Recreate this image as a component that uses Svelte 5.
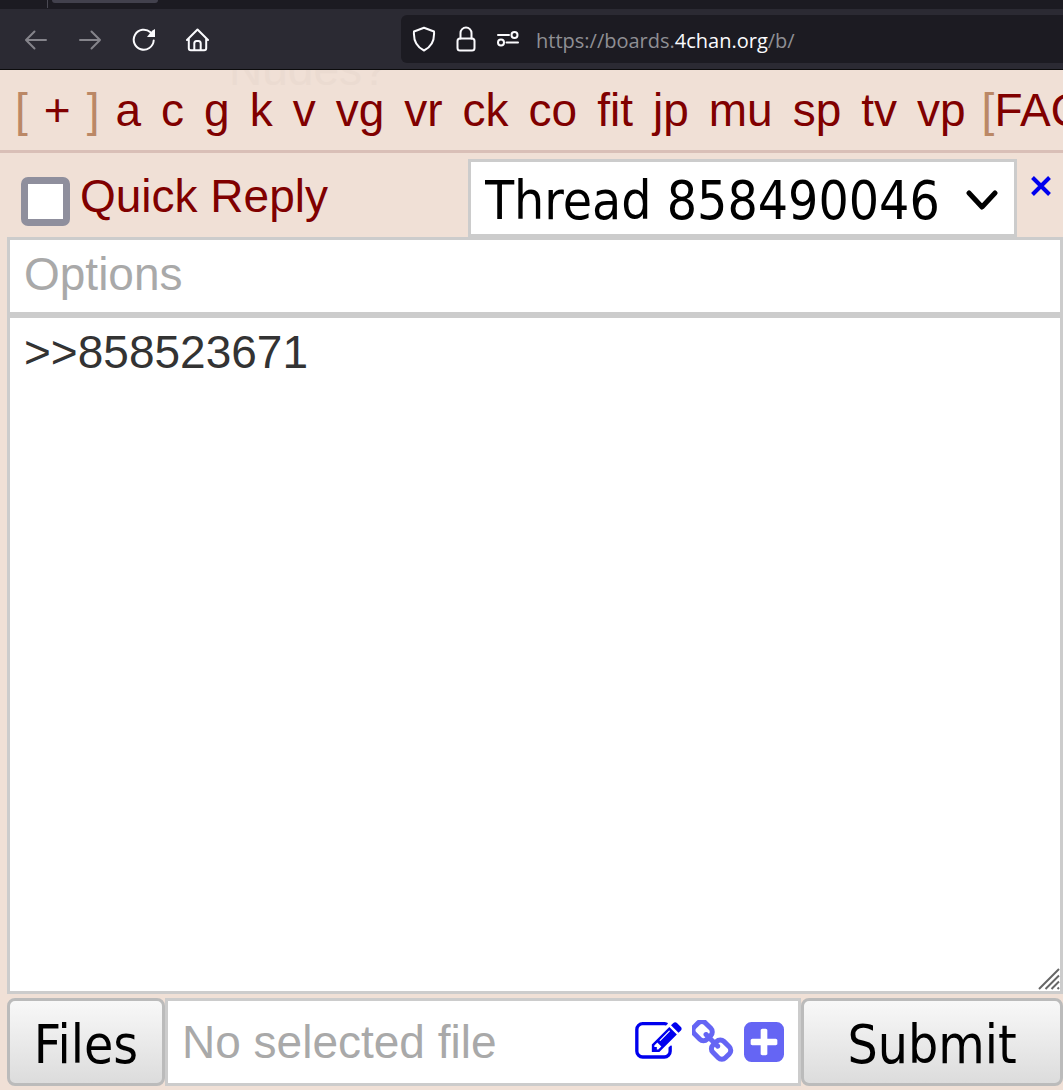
<script lang="ts">
  const boards: string[] = ['a', 'c', 'g', 'k', 'v', 'vg', 'vr', 'ck', 'co', 'fit', 'jp', 'mu', 'sp', 'tv', 'vp']

  let showForm = $state(false)
  let thread = $state('858490046')
  let options = $state('')
  let comment = $state('>>858523671')
  let fileName = $state('')
</script>

<div class="window">
  <div class="tabs">
    <span class="tab-divider"></span>
    <span class="tab"></span>
  </div>

  <div class="toolbar">
    <div class="nav-buttons">
      <button type="button" class="dim" aria-label="Back">
        <svg width="24" height="24" viewBox="0 0 24 24"><path d="M22 12H2.500M10.500 3.500 2 12l8.500 8.500" /></svg>
      </button>
      <button type="button" class="dim" aria-label="Forward">
        <svg width="24" height="24" viewBox="0 0 24 24"><path d="M2 12h20M13.500 3.500 22 12l-8.500 8.500" /></svg>
      </button>
      <button type="button" aria-label="Reload">
        <svg width="24" height="24" viewBox="0 0 24 24">
          <path d="M21.700 12.500a10 10 0 1 1-3.200-8.200" />
          <path class="solid" d="M23 1v8h-8l2.500-3.200L20.500 2.500z" />
        </svg>
      </button>
      <button type="button" aria-label="Home">
        <svg width="24" height="24" viewBox="0 0 24 24">
          <path d="M1 12 11.500 1.500 22 12M2.800 10.500v9.700q0 2 2 2h13.400q2 0 2-2v-9.700M8.300 22v-6.500q0-2.500 2.200-2.500h2q2.200 0 2.200 2.500V22" />
        </svg>
      </button>
    </div>
    <div class="address">
      <svg width="24" height="26" viewBox="0 0 24 26">
        <path d="M12 1.800 22 5.500c.6 8-2.500 15.500-10 19C4.500 21 1.400 13.500 2 5.500z" />
      </svg>
      <svg width="20" height="26" viewBox="0 0 20 26">
        <rect x="1.500" y="12.500" width="17" height="12" rx="2.500" />
        <path d="M4.500 12.500V7a5.500 5.500 0 0 1 11 0v5.500" />
      </svg>
      <svg width="24" height="26" viewBox="0 0 24 26">
        <circle cx="18.500" cy="9" r="3" /><circle cx="5" cy="16.500" r="3" />
        <path d="M2 9h11M10.500 16.500H22" />
      </svg>
      <span class="url">https://boards.<b>4chan.org</b>/b/</span>
    </div>
  </div>

  <main>
    <div class="ghost" aria-hidden="true"><span>Nudes?</span></div>

    <nav class="nav">
      <span class="more">[<a href="#more">+</a>]</span>
      <span class="boards">
        {#each boards as board}
          <a href={`#${board}`}>{board}</a>
        {/each}
      </span>
      <span>[<a href="#faq">FAQ</a>]</span>
    </nav>

    <form class="reply" onsubmit={(e) => e.preventDefault()}>
      <div class="head">
        <label class="title">
          <input type="checkbox" bind:checked={showForm} />
          Quick Reply
        </label>
        <div class="select">
          <select bind:value={thread} aria-label="Thread">
            <option value="858490046">Thread 858490046</option>
          </select>
          <svg width="32" height="20" viewBox="0 0 32 20"><path d="M3 3l13 14L29 3" /></svg>
        </div>
        <button type="button" class="close" aria-label="Close">
          <svg width="20" height="20" viewBox="0 0 20 20"><path d="M1.500 1.500l17 17M18.500 1.500l-17 17" /></svg>
        </button>
      </div>

      <input class="field" type="text" placeholder="Options" aria-label="Options" bind:value={options} />

      <div class="comment">
        <textarea class="field" aria-label="Comment" bind:value={comment}></textarea>
        <svg class="grip" width="22" height="22" viewBox="0 0 22 22">
          <path d="M1 21 21 1M7.500 21 21 7.500M13.500 21l7.500-7.500M19.500 21l1.500-1.500" />
        </svg>
      </div>

      <div class="foot">
        <button type="button" class="button">Files</button>
        <div class="file">
          <input type="text" placeholder="No selected file" aria-label="File" readonly bind:value={fileName} />
          <button type="button" aria-label="Edit image">
            <svg width="47" height="40" viewBox="0 128 1792 1536">
              <path
                d="M888 1184l116-116-152-152-116 116v56h96v96h56zm440-720q-16-16-33 1l-350 350q-17 17-1 33t33-1l350-350q17-17 1-33zm80 594v190q0 119-84.500 203.500t-203.500 84.500h-832q-119 0-203.500-84.500t-84.500-203.500v-832q0-119 84.500-203.500t203.500-84.500h832q63 0 117 25 15 7 18 23 3 17-9 29l-49 49q-14 14-32 8-23-6-45-6h-832q-66 0-113 47t-47 113v832q0 66 47 113t113 47h832q66 0 113-47t47-113v-126q0-13 9-22l64-64q15-15 35-7t20 29zm-96-738l288 288-672 672h-288v-288zm444 132l-92 92-288-288 92-92q28-28 68-28t68 28l152 152q28 28 28 68t-28 68z"
              />
            </svg>
          </button>
          <button type="button" class="light" aria-label="Add from URL">
            <svg width="42" height="44" viewBox="76 76 1600 1640">
              <path
                d="M1456 1216q0-40-28-68l-208-208q-28-28-68-28-42 0-72 32 3 3 19 18.500t21.500 21.500 15 19 13 25.500 3.500 27.500q0 40-28 68t-68 28q-15 0-27.500-3.500t-25.500-13-19-15-21.500-21.500-18.500-19q-33 31-33 73 0 40 28 68l206 207q27 27 68 27 40 0 68-26l147-146q28-28 28-67zm-703-705q0-40-28-68l-206-207q-28-28-68-28-39 0-68 27l-147 146q-28 28-28 67 0 40 28 68l208 208q27 27 68 27 42 0 72-31-3-3-19-18.500t-21.500-21.500-15-19-13-25.500-3.500-27.500q0-40 28-68t68-28q15 0 27.500 3.500t25.500 13 19 15 21.500 21.500 18.500 19q33-31 33-73zm895 705q0 120-85 203l-147 146q-83 83-203 83-121 0-204-85l-206-207q-83-83-83-203 0-123 88-209l-88-88q-86 88-208 88-120 0-204-84l-208-208q-84-84-84-204t85-203l147-146q83-83 203-83 121 0 204 85l206 207q83 83 83 203 0 123-88 209l88 88q86-88 208-88 120 0 204 84l208 208q84 84 84 204z"
              />
            </svg>
          </button>
          <button type="button" class="light" aria-label="Add file">
            <svg width="40" height="40" viewBox="128 128 1536 1536">
              <path
                d="M1408 960v-128q0-26-19-45t-45-19h-320v-320q0-26-19-45t-45-19h-128q-26 0-45 19t-19 45v320h-320q-26 0-45 19t-19 45v128q0 26 19 45t45 19h320v320q0 26 19 45t45 19h128q26 0 45-19t19-45v-320h320q26 0 45-19t19-45zm256-544v960q0 119-84.500 203.500t-203.500 84.500h-960q-119 0-203.500-84.500t-84.500-203.500v-960q0-119 84.500-203.500t203.500-84.500h960q119 0 203.500 84.500t84.500 203.500z"
              />
            </svg>
          </button>
        </div>
        <button type="submit" class="button submit">Submit</button>
      </div>
    </form>
  </main>
</div>

<style>
  :global(body) {
    background: #f0e0d6;
  }

  .window {
    display: flex;
    flex-direction: column;
    min-height: 100vh;
    overflow: hidden;
    font-family: 'Liberation Sans', Arial, sans-serif;
    font-size: 46px;
    line-height: 54px;
    color: #bb8866;
  }

  button {
    padding: 0;
    border: 0;
    background: none;
    cursor: pointer;
  }

  svg {
    display: block;
    flex: none;
  }

  .tabs {
    display: flex;
    gap: 4px;
    height: 9px;
    padding-left: 47px;
    background: #1c1b22;
  }

  .tab-divider {
    width: 1px;
    height: 8px;
    background: #4a4953;
  }

  .tab {
    width: 106px;
    height: 3px;
    border-radius: 0 0 4px 4px;
    background: #42414d;
  }

  .toolbar {
    display: flex;
    height: 54px;
    padding-top: 6px;
    border-bottom: 1px solid #0c0c0d;
    background: #2b2a33;
  }

  .toolbar svg {
    fill: none;
    stroke: #fbfbfe;
    stroke-width: 2;
    stroke-linecap: round;
    stroke-linejoin: round;
  }

  .toolbar .solid {
    fill: #fbfbfe;
    stroke-width: 0;
  }

  .toolbar .dim svg {
    stroke: #85848b;
  }

  .nav-buttons {
    display: flex;
    gap: 30px;
    width: 377px;
    height: 50px;
    padding-left: 24px;
  }

  .address {
    display: flex;
    flex: 1;
    align-items: center;
    gap: 20px;
    height: 48px;
    padding-left: 11px;
    border-radius: 6px 0 0 6px;
    background: #1c1b22;
  }

  .url {
    font-family: 'Open Sans', 'Segoe UI', sans-serif;
    font-size: 20px;
    line-height: 30px;
    margin: 3px 0 0 -4px;
    color: #8f8f94;
  }

  .url b {
    font-weight: 400;
    color: #fbfbfe;
  }

  main {
    position: relative;
    display: flex;
    flex: 1;
    flex-direction: column;
  }

  .ghost {
    position: absolute;
    top: 0;
    left: 229px;
    height: 24px;
    overflow: hidden;
    color: #ebdbd1;
  }

  .ghost span {
    display: block;
    margin-top: -28px;
  }

  .nav {
    position: relative;
    display: flex;
    gap: 16px;
    padding: 13px 0 13px 15px;
    border-bottom: 3px solid #d9bfb7;
    white-space: nowrap;
  }

  .nav a {
    color: #800000;
    text-decoration: none;
  }

  .more {
    display: flex;
    gap: 16px;
  }

  .boards {
    display: flex;
    gap: 20px;
  }

  .reply {
    display: flex;
    flex: 1;
    flex-direction: column;
    padding: 6px 0 4px 7px;
  }

  .head {
    display: flex;
  }

  .title {
    display: flex;
    flex: 1;
    gap: 10px;
    padding: 10px 0 0 14px;
    color: #800000;
  }

  .title input {
    appearance: none;
    box-sizing: border-box;
    width: 49px;
    height: 49px;
    margin: 8px 0 0;
    border: 7px solid #8f8f9d;
    border-radius: 7px;
    background: #fff;
  }

  .select {
    position: relative;
  }

  .select select {
    appearance: none;
    box-sizing: border-box;
    height: 78px;
    padding: 4px 74px 0 14px;
    border: 3px solid #ccc;
    border-radius: 0;
    background: #fff;
    color: #000;
    font: 53px 'DejaVu Sans Condensed', Tahoma, sans-serif;
  }

  .select svg {
    position: absolute;
    top: 31px;
    right: 19px;
    fill: none;
    stroke: #000;
    stroke-width: 5;
    stroke-linecap: round;
    stroke-linejoin: round;
    pointer-events: none;
  }

  .close {
    align-self: flex-start;
    padding: 17px 12px 0 14px;
  }

  .close svg {
    fill: none;
    stroke: #00e;
    stroke-width: 4;
  }

  .field {
    box-sizing: border-box;
    width: 100%;
    height: 78px;
    margin: 0;
    padding: 0 14px 4px;
    border: 3px solid #ccc;
    border-radius: 0;
    outline: none;
    background: #fff;
    color: #333;
    font: inherit;
  }

  input::placeholder {
    color: #a9a9a9;
    opacity: 1;
  }

  .comment {
    position: relative;
    display: flex;
    flex: 1;
  }

  textarea.field {
    height: auto;
    padding-top: 7px;
    resize: none;
  }

  .grip {
    position: absolute;
    right: 3px;
    bottom: 4px;
    fill: none;
    stroke: #666;
    stroke-width: 2;
  }

  .foot {
    display: flex;
    height: 88px;
    margin-top: 4px;
  }

  .button {
    box-sizing: border-box;
    width: 158px;
    padding-top: 4px;
    border: 3px solid #bbb;
    border-radius: 8px;
    background: linear-gradient(#f8f8f8, #dcdcdc);
    color: #000;
    font: 53px 'DejaVu Sans Condensed', Tahoma, sans-serif;
  }

  .submit {
    width: 262px;
  }

  .file {
    display: flex;
    flex: 1;
    align-items: center;
    gap: 10px;
    min-width: 0;
    padding: 0 14px;
    border: 3px solid #ccc;
    background: #fff;
  }

  .file input {
    flex: 1;
    min-width: 0;
    padding: 0;
    border: 0;
    outline: none;
    background: none;
    font: inherit;
  }

  .file svg {
    fill: #00e;
  }

  .light {
    opacity: 0.6;
  }
</style>
